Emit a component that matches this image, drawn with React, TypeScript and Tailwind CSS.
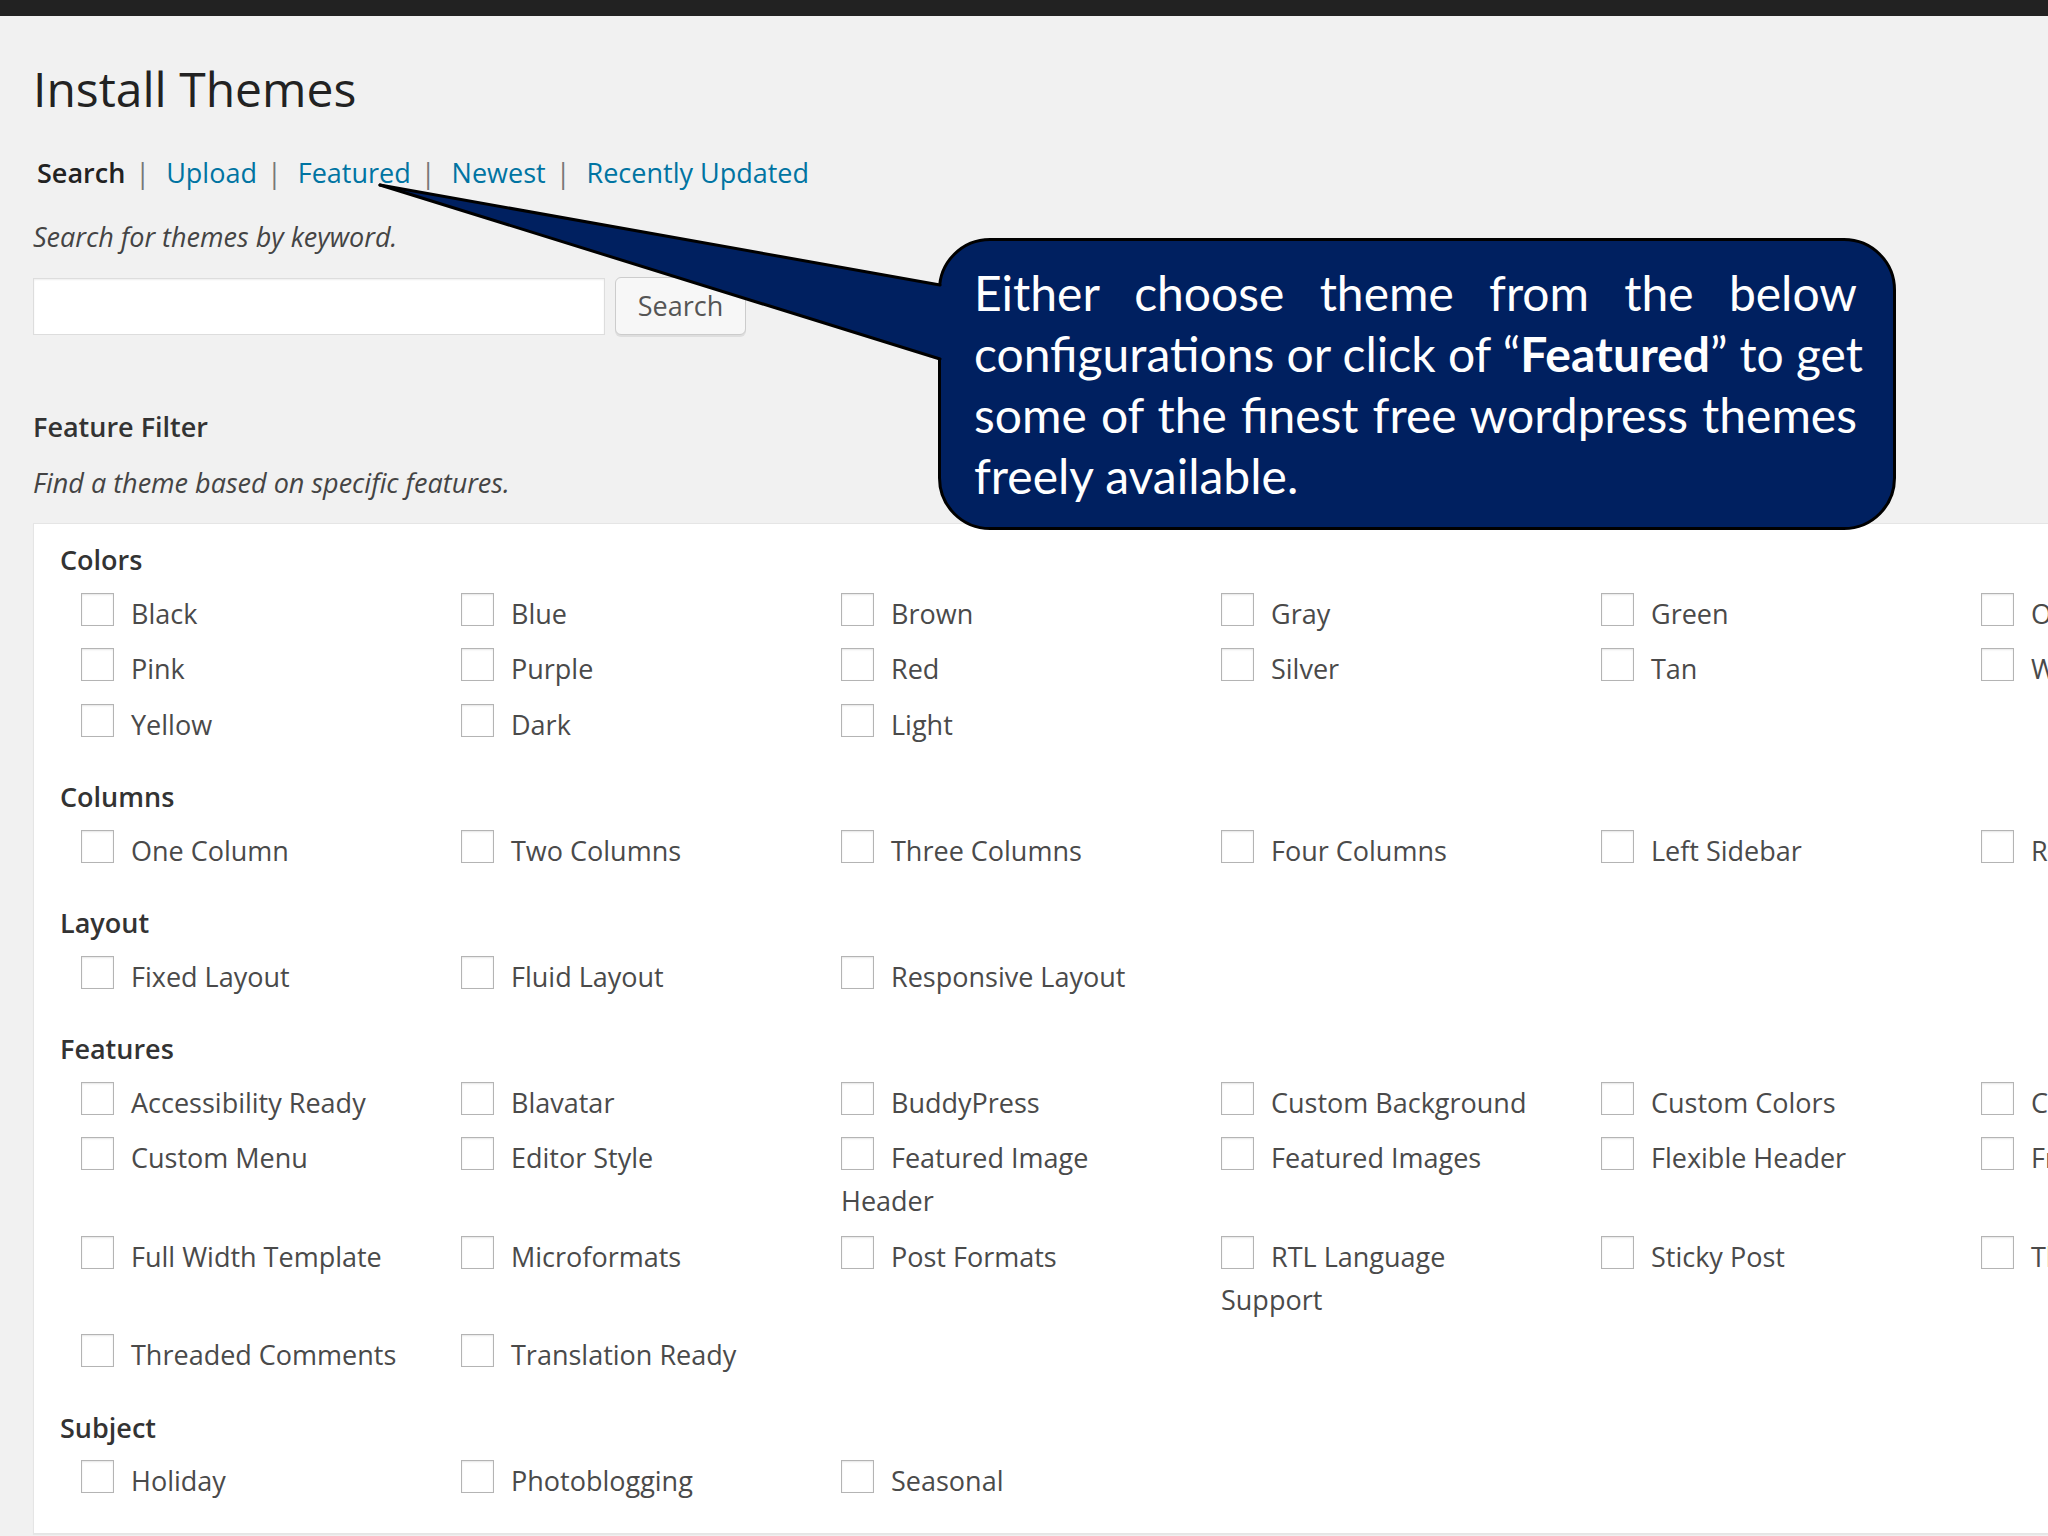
import React from "react";

type Group = { title: string; rows: string[][] };

const groups: Group[] = [
  {
    title: "Colors",
    rows: [
      ["Black", "Blue", "Brown", "Gray", "Green", "Orange"],
      ["Pink", "Purple", "Red", "Silver", "Tan", "White"],
      ["Yellow", "Dark", "Light"],
    ],
  },
  {
    title: "Columns",
    rows: [["One Column", "Two Columns", "Three Columns", "Four Columns", "Left Sidebar", "Right Sidebar"]],
  },
  {
    title: "Layout",
    rows: [["Fixed Layout", "Fluid Layout", "Responsive Layout"]],
  },
  {
    title: "Features",
    rows: [
      ["Accessibility Ready", "Blavatar", "BuddyPress", "Custom Background", "Custom Colors", "Custom Header"],
      ["Custom Menu", "Editor Style", "Featured Image|Header", "Featured Images", "Flexible Header", "Front Page Posting"],
      ["Full Width Template", "Microformats", "Post Formats", "RTL Language|Support", "Sticky Post", "Theme Options"],
      ["Threaded Comments", "Translation Ready"],
    ],
  },
  {
    title: "Subject",
    rows: [["Holiday", "Photoblogging", "Seasonal"]],
  },
];

function Checkbox() {
  return (
    <span className="inline-block w-[33px] h-[33px] mr-[17px] align-[-2px] bg-white border border-[#b4b4b4] shadow-[inset_0_1px_2px_rgba(0,0,0,0.1)]" />
  );
}

function Item({ label }: { label: string }) {
  const [first, second] = label.split("|");
  return (
    <li className="w-[320px] mr-[60px] mb-[12.5px] leading-[43px] whitespace-nowrap text-[#4a4a4a]">
      <Checkbox />
      {first}
      {second && (
        <>
          <br />
          {second}
        </>
      )}
    </li>
  );
}

export default function App() {
  const nav = ["Upload", "Featured", "Newest", "Recently Updated"];
  return (
    <div className="relative w-[2048px] h-[1536px] overflow-hidden bg-[#f1f1f1] font-['Open_Sans',sans-serif] text-[27px]">
      <div className="h-4 bg-[#222]" />

      <div className="pl-[33px]">
        <h1 className="mt-[40px] text-[48px] leading-[66px] font-normal text-[#222]">
          Install Themes
        </h1>

        {/* Tabs */}
        <div className="mt-[31px] flex leading-[40px]">
          <span className="pl-[4px] font-semibold text-[#222]">Search</span>
          {nav.map((n) => (
            <span key={n} className="flex">
              <span className="ml-[10px] mr-[16px] text-[#777]">|</span>
              <span className="text-[#0074a2]">{n}</span>
            </span>
          ))}
        </div>

        <p className="mt-[24px] leading-[40px] italic text-[#444]">
          Search for themes by keyword.
        </p>

        <div className="mt-[21px] flex items-start gap-[10px]">
          <div className="w-[572px] h-[57px] bg-white border border-[#ddd] shadow-[inset_0_1px_2px_rgba(0,0,0,0.07)]" />
          <button className="w-[131px] h-[58px] -mt-px rounded-[6px] bg-[#f7f7f7] border border-[#ccc] shadow-[0_2px_0_rgba(0,0,0,0.08)] text-[#555] text-[27px]">
            Search
          </button>
        </div>

        <h3 className="mt-[72px] leading-[40px] font-semibold text-[#333]">Feature Filter</h3>
        <p className="mt-[16px] leading-[40px] italic text-[#444]">
          Find a theme based on specific features.
        </p>

        {/* Filter box */}
        <div className="mt-[19.5px] w-[2400px] bg-white border border-[#e5e5e5] shadow-[0_1px_1px_rgba(0,0,0,0.04)] pt-[16.5px] pb-[18.5px] pl-[26px]">
          {groups.map((g) => (
            <div key={g.title} className="mb-[19px] last:mb-0">
              <h4 className="leading-[40px] mb-[11.5px] font-semibold text-[#333]">{g.title}</h4>
              <div className="ml-[21px]">
                {g.rows.map((r, i) => (
                  <ul key={i} className="flex items-start">
                    {r.map((l) => (
                      <Item key={l} label={l} />
                    ))}
                  </ul>
                ))}
              </div>
            </div>
          ))}
        </div>
      </div>

      {/* Callout */}
      <div className="absolute left-[938px] top-[238px] w-[958px] h-[292px] rounded-[52px] border-[3px] border-black bg-[#002060] pt-[21px] pl-[33px] pr-[36px] font-['Lato',sans-serif] text-[48px] leading-[61px] text-white">
        <div className="whitespace-nowrap [text-align-last:justify]">Either choose theme from the below</div>
        <div className="whitespace-nowrap [text-align-last:justify]">
          configurations or click of “<b className="font-bold">Featured</b>” to get
        </div>
        <div className="whitespace-nowrap [text-align-last:justify]">some of the finest free wordpress themes</div>
        <div className="whitespace-nowrap">freely available.</div>
      </div>
      <svg className="absolute left-0 top-0 pointer-events-none" width="2048" height="600">
        <polygon points="380,185 947,287 947,361" fill="#002060" />
        <line x1="380" y1="185" x2="940" y2="285" stroke="#000" strokeWidth="3" strokeLinecap="round" />
        <line x1="380" y1="185" x2="940" y2="359" stroke="#000" strokeWidth="3" strokeLinecap="round" />
      </svg>
    </div>
  );
}
